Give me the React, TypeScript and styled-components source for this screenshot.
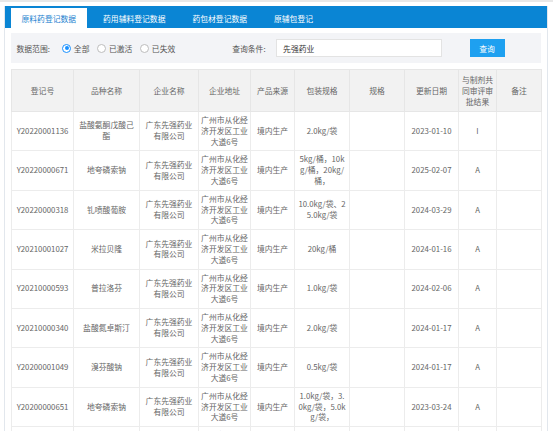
import React from 'react';
import styled, { createGlobalStyle } from 'styled-components';

interface RecordRow {
  no: string;
  name: string[];
  pack: string[];
  spec: string;
  date: string;
  result: string;
  remark: string;
}

const COMPANY = ['广东先强药业', '有限公司'];
const ADDRESS = ['广州市从化经', '济开发区工业', '大道6号'];
const SOURCE = '境内生产';

const rows: RecordRow[] = [
  { no: 'Y20220001136', name: ['盐酸氨酮戊酸己', '酯'], pack: ['2.0kg/袋'], spec: '', date: '2023-01-10', result: 'I', remark: '' },
  { no: 'Y20220000671', name: ['地夸磷索钠'], pack: ['5kg/桶，10k', 'g/桶，20kg/', '桶，'], spec: '', date: '2025-02-07', result: 'A', remark: '' },
  { no: 'Y20220000318', name: ['钆喷酸葡胺'], pack: ['10.0kg/袋、2', '5.0kg/袋'], spec: '', date: '2024-03-29', result: 'A', remark: '' },
  { no: 'Y20210001027', name: ['米拉贝隆'], pack: ['20kg/桶'], spec: '', date: '2024-01-16', result: 'A', remark: '' },
  { no: 'Y20210000593', name: ['普拉洛芬'], pack: ['1.0kg/袋'], spec: '', date: '2024-02-06', result: 'A', remark: '' },
  { no: 'Y20210000340', name: ['盐酸氮卓斯汀'], pack: ['2.0kg/袋'], spec: '', date: '2024-01-17', result: 'A', remark: '' },
  { no: 'Y20200001049', name: ['溴芬酸钠'], pack: ['0.5kg/袋'], spec: '', date: '2024-01-17', result: 'A', remark: '' },
  { no: 'Y20200000651', name: ['地夸磷索钠'], pack: ['1.0kg/袋，3.', '0kg/袋，5.0k', 'g/袋，'], spec: '', date: '2023-03-24', result: 'A', remark: '' },
  { no: 'Y20200000322', name: ['盐酸奥洛他定'], pack: ['1.0kg/袋'], spec: '', date: '2023-03-10', result: 'A', remark: '' },
];

const columns: { title: string[]; width: number }[] = [
  { title: ['登记号'], width: 62 },
  { title: ['品种名称'], width: 66 },
  { title: ['企业名称'], width: 59 },
  { title: ['企业地址'], width: 52 },
  { title: ['产品来源'], width: 44 },
  { title: ['包装规格'], width: 55 },
  { title: ['规格'], width: 55 },
  { title: ['更新日期'], width: 54 },
  { title: ['与制剂共', '同审评审', '批结果'], width: 38 },
  { title: ['备注'], width: 45 },
];

const tabs = ['原料药登记数据', '药用辅料登记数据', '药包材登记数据', '原辅包登记'];

const GlobalStyle = createGlobalStyle`
  html, body {
    margin: 0;
    padding: 0;
    background: #fff;
    overflow: hidden;
  }
  body {
    font-family: "Noto Sans CJK SC", "Noto Sans", sans-serif;
    color: #666;
  }
`;

const TopRule = styled.div`
  height: 2px;
  background: #e8e8e8;
`;

const Frame = styled.div`
  margin: 4px 0 0 4px;
  width: 544px;
  box-sizing: border-box;
  border-left: 1px solid #e2e7ed;
  border-right: 1px solid #e2e7ed;
  min-height: 440px;
`;

const TabBar = styled.div`
  display: flex;
  align-items: flex-end;
  gap: 6px;
  height: 22px;
  padding-left: 6px;
  background: #0a85d4;
`;

const Tab = styled.div<{ $active?: boolean }>`
  display: flex;
  align-items: center;
  height: 20px;
  padding: 0 10.5px;
  font-size: 7.8px;
  white-space: nowrap;
  color: ${(p) => (p.$active ? '#1b7fcf' : '#fff')};
  background: ${(p) => (p.$active ? '#fff' : 'transparent')};
`;

const Content = styled.div`
  padding: 0 6px;
`;

const SearchPanel = styled.div`
  display: flex;
  align-items: center;
  height: 30px;
  margin-top: 5px;
  padding-left: 5.5px;
  background: #f3f4f7;
  font-size: 7.8px;
  color: #555;
`;

const FieldLabel = styled.span<{ $gap?: number }>`
  margin-left: ${(p) => p.$gap ?? 0}px;
  white-space: nowrap;
`;

const RadioOption = styled.label<{ $gap: number }>`
  display: flex;
  align-items: center;
  margin-left: ${(p) => p.$gap}px;
  white-space: nowrap;
`;

const RadioDot = styled.span<{ $checked?: boolean }>`
  display: inline-flex;
  align-items: center;
  justify-content: center;
  width: 9px;
  height: 9px;
  margin-right: 2.5px;
  box-sizing: border-box;
  border-radius: 50%;
  background: #fff;
  border: 1px solid ${(p) => (p.$checked ? '#1890ff' : '#bdbdbd')};

  &::after {
    content: '';
    display: ${(p) => (p.$checked ? 'block' : 'none')};
    width: 4px;
    height: 4px;
    border-radius: 50%;
    background: #1890ff;
  }
`;

const KeywordInput = styled.div`
  display: flex;
  align-items: center;
  width: 165.5px;
  height: 18px;
  margin-left: 10.5px;
  padding: 0 6px;
  box-sizing: border-box;
  background: #fff;
  border: 1px solid #e3e3e3;
  color: #333;
`;

const SearchButton = styled.div`
  display: flex;
  align-items: center;
  justify-content: center;
  width: 35px;
  height: 18px;
  margin-left: 28px;
  background: #1ea0f0;
  color: #fff;
`;

const Table = styled.table`
  width: 530px;
  margin-top: 6px;
  border-collapse: collapse;
  table-layout: fixed;
  font-size: 7.8px;
  color: #666;
`;

const HeadCell = styled.th`
  padding: 4px 2px;
  line-height: 11px;
  font-weight: normal;
  text-align: center;
  vertical-align: middle;
  background: #f2f2f2;
  border: 1px solid #e6e6e6;
`;

const Cell = styled.td`
  padding: 3px 2px;
  line-height: 10.8px;
  text-align: center;
  vertical-align: middle;
  border: 1px solid #ececec;
  white-space: nowrap;
`;

const Lines = ({ lines }: { lines: string[] }) => (
  <>
    {lines.map((line, i) => (
      <React.Fragment key={i}>
        {i > 0 && <br />}
        {line}
      </React.Fragment>
    ))}
  </>
);

export default function App() {
  return (
    <>
      <GlobalStyle />
      <TopRule />
      <Frame>
        <TabBar>
          {tabs.map((t, i) => (
            <Tab key={t} $active={i === 0}>
              {t}
            </Tab>
          ))}
        </TabBar>
        <Content>
          <SearchPanel>
            <FieldLabel>数据范围:</FieldLabel>
            <RadioOption $gap={12.5}>
              <RadioDot $checked />
              全部
            </RadioOption>
            <RadioOption $gap={8}>
              <RadioDot />
              已激活
            </RadioOption>
            <RadioOption $gap={8}>
              <RadioDot />
              已失效
            </RadioOption>
            <FieldLabel $gap={57}>查询条件:</FieldLabel>
            <KeywordInput>先强药业</KeywordInput>
            <SearchButton>查询</SearchButton>
          </SearchPanel>
          <Table>
            <colgroup>
              {columns.map((c, i) => (
                <col key={i} style={{ width: c.width }} />
              ))}
            </colgroup>
            <thead>
              <tr>
                {columns.map((c, i) => (
                  <HeadCell key={i}>
                    <Lines lines={c.title} />
                  </HeadCell>
                ))}
              </tr>
            </thead>
            <tbody>
              {rows.map((r) => (
                <tr key={r.no}>
                  <Cell>{r.no}</Cell>
                  <Cell>
                    <Lines lines={r.name} />
                  </Cell>
                  <Cell>
                    <Lines lines={COMPANY} />
                  </Cell>
                  <Cell>
                    <Lines lines={ADDRESS} />
                  </Cell>
                  <Cell>{SOURCE}</Cell>
                  <Cell>
                    <Lines lines={r.pack} />
                  </Cell>
                  <Cell>{r.spec}</Cell>
                  <Cell>{r.date}</Cell>
                  <Cell>{r.result}</Cell>
                  <Cell>{r.remark}</Cell>
                </tr>
              ))}
            </tbody>
          </Table>
        </Content>
      </Frame>
    </>
  );
}
